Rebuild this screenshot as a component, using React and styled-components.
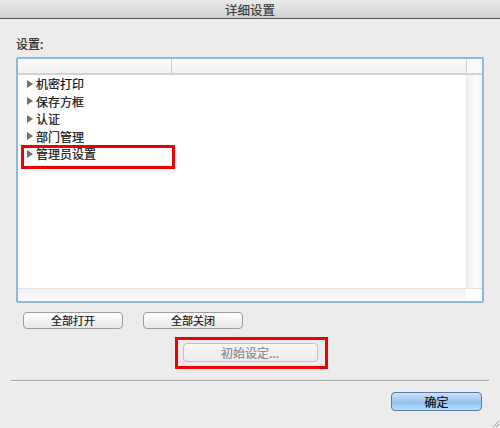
import styled, { createGlobalStyle } from "styled-components";

const GlobalStyle = createGlobalStyle`
  html, body {
    margin: 0;
    padding: 0;
    background: #ececec;
  }
  body {
    font-family: "Noto Sans CJK SC", "Liberation Sans", sans-serif;
    -webkit-text-stroke: 0.2px currentColor;
  }
`;

const items = ["机密打印", "保存方框", "认证", "部门管理", "管理员设置"];

function App() {
  return (
    <>
      <GlobalStyle />
      <Dialog>
        <TitleBar>详细设置</TitleBar>
        <Body>
          <Label>设置:</Label>
          <ListBox>
            <HeaderRow>
              <HeaderCell $width={153} />
              <HeaderCell $grow />
              <HeaderCorner />
            </HeaderRow>
            <ListMain>
              <Rows>
                {items.map((name, i) => (
                  <Row key={name} $marked={i === items.length - 1}>
                    <Arrow />
                    {name}
                  </Row>
                ))}
              </Rows>
              <VScroll />
            </ListMain>
            <HScrollRow>
              <HScroll />
              <ScrollCorner />
            </HScrollRow>
          </ListBox>
          <ButtonRow>
            <Button>全部打开</Button>
            <Button>全部关闭</Button>
          </ButtonRow>
          <CenterRow>
            <Marker>
              <Button $wide disabled>
                初始设定...
              </Button>
            </Marker>
          </CenterRow>
        </Body>
        <Separator />
        <Footer>
          <PrimaryButton>确定</PrimaryButton>
        </Footer>
        <Grip viewBox="0 0 8 8" width="8" height="8">
          <path d="M8 2 L2 8 M8 5 L5 8" stroke="#9a9a9a" strokeWidth="1" />
        </Grip>
      </Dialog>
    </>
  );
}

const Dialog = styled.div`
  position: relative;
  width: 500px;
  height: 428px;
  background: #ececec;
  display: flex;
  flex-direction: column;
  overflow: hidden;
`;

const TitleBar = styled.div`
  height: 18px;
  line-height: 19px;
  text-align: center;
  font-size: 12.5px;
  color: #3a3a3a;
  background: linear-gradient(#eaeaea, #d2d2d2);
  border-bottom: 1px solid #555;
`;

const Body = styled.div`
  padding: 0 16px;
  display: flex;
  flex-direction: column;
`;

const Label = styled.div`
  margin-top: 18px;
  height: 20px;
  line-height: 14px;
  font-size: 12px;
  color: #222;
`;

const ListBox = styled.div`
  width: 464px;
  height: 242px;
  border: 2px solid #8fb8de;
  border-radius: 2px;
  background: #fff;
  display: flex;
  flex-direction: column;
`;

const HeaderRow = styled.div`
  height: 14px;
  display: flex;
  border-bottom: 2px solid #d2d2d2;
  background: linear-gradient(#fdfdfd, #f1f1f1);
`;

const HeaderCell = styled.div`
  width: ${(p) => (p.$width ? `${p.$width}px` : "auto")};
  flex: ${(p) => (p.$grow ? 1 : "none")};
  border-right: 1px solid #cfcfcf;
`;

const HeaderCorner = styled.div`
  width: 15px;
  background: #fafafa;
`;

const ListMain = styled.div`
  flex: 1;
  display: flex;
  min-height: 0;
`;

const Rows = styled.div`
  flex: 1;
  padding-left: 9px;
`;

const Row = styled.div`
  position: relative;
  height: 17.5px;
  line-height: 17.5px;
  font-size: 12px;
  color: #111;
  display: flex;
  align-items: center;

  ${(p) =>
    p.$marked &&
    `
    &::after {
      content: "";
      position: absolute;
      left: -6px;
      top: 0;
      width: 148px;
      height: 18px;
      border: 3px solid #f00000;
    }
  `}
`;

const Arrow = styled.span`
  width: 0;
  height: 0;
  border-top: 4px solid transparent;
  border-bottom: 4px solid transparent;
  border-left: 6px solid #707070;
  margin-right: 3px;
`;

const VScroll = styled.div`
  width: 15px;
  border-left: 1px solid #e6e6e6;
  background: linear-gradient(90deg, #efefef, #fbfbfb 60%, #f4f4f4);
`;

const HScrollRow = styled.div`
  height: 12px;
  display: flex;
  border-top: 1px solid #e2e2e2;
`;

const HScroll = styled.div`
  flex: 1;
  background: linear-gradient(#f2f2f2, #fbfbfb);
`;

const ScrollCorner = styled.div`
  width: 16px;
  background: #fff;
`;

const ButtonRow = styled.div`
  margin-top: 9px;
  padding-left: 7px;
  display: flex;
  gap: 20px;
`;

const Button = styled.button`
  width: ${(p) => (p.$wide ? "135px" : "100px")};
  height: ${(p) => (p.$wide ? "19px" : "17px")};
  padding: 0;
  border: 1px solid #9c9c9c;
  border-radius: 4px;
  background: linear-gradient(#ffffff, #f3f3f3 50%, #e6e6e6);
  font-family: inherit;
  font-size: ${(p) => (p.$wide ? "12px" : "11px")};
  line-height: 1;
  color: #1a1a1a;

  &:disabled {
    color: #8a8a8a;
    border-color: #c2c2c2;
    background: linear-gradient(#f7f7f7, #ececec);
  }
`;

const CenterRow = styled.div`
  margin-top: 8px;
  display: flex;
  justify-content: center;
  padding-left: 2px;
`;

const Marker = styled.div`
  border: 3px solid #f00000;
  padding: 3px 7px 4px 5px;
  display: flex;
`;

const Separator = styled.div`
  margin: 11px 11px 0;
  height: 1px;
  background: #a3a3a3;
  border-bottom: 1px solid #f6f6f6;
`;

const Footer = styled.div`
  margin-top: 10px;
  padding-right: 18px;
  display: flex;
  justify-content: flex-end;
`;

const PrimaryButton = styled.button`
  width: 91px;
  height: 19px;
  padding: 0;
  border: 1px solid #5a7aa8;
  border-radius: 4px;
  background: linear-gradient(#cfe3fb, #9cc7f3 50%, #86bcf0 51%, #bfe0fb);
  font-family: inherit;
  font-size: 12px;
  line-height: 1;
  color: #111;
`;

const Grip = styled.svg`
  position: absolute;
  right: 1px;
  bottom: 1px;
`;

export default App;
